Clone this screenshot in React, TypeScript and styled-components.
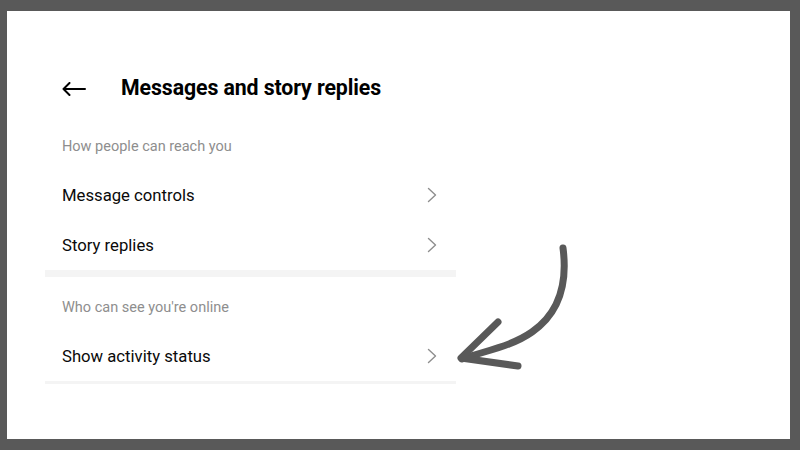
import React from 'react';
import styled, { createGlobalStyle } from 'styled-components';

const GlobalStyle = createGlobalStyle`
    html, body {
        margin: 0;
        padding: 0;
        background: #595959;
    }
    body {
        font-family: Roboto, "Liberation Sans", Arial, sans-serif;
        -webkit-font-smoothing: antialiased;
    }
`

const Frame = styled.div`
    width: 800px;
    height: 450px;
    box-sizing: border-box;
    padding: 11px 10px 11px 7px;
`

const Panel = styled.div`
    position: relative;
    height: 100%;
    background: #ffffff;
    padding-left: 38px;
`

const Column = styled.div`
    width: 411px;
`

const Header = styled.div`
    display: flex;
    align-items: center;
    height: 48px;
    padding: 52px 0 0 17px;
`

const BackButton = styled.div`
    width: 24px;
    height: 14px;
    margin: 3px 35px 0 0;
    display: flex;
`

const Title = styled.h1`
    margin: 0;
    font-size: 21.3px;
    font-weight: 700;
    color: #000;
    letter-spacing: -0.1px;
`

const SectionLabel = styled.div<{ $top: number }>`
    padding: ${({ $top }) => $top}px 0 14px 17px;
    line-height: 18px;
    font-size: 14.5px;
    color: #8e8e8e;
`

const Row = styled.div`
    display: flex;
    align-items: center;
    justify-content: space-between;
    height: 50px;
    padding: 0 19px 0 17px;
    font-size: 16.7px;
    color: #0a0a0a;
`

const Divider = styled.div<{ $size: number }>`
    height: ${({ $size }) => $size}px;
    background: #f4f4f4;
`

const Annotation = styled.svg`
    position: absolute;
    left: 433px;
    top: 215px;
`

function BackArrow () {
    return (
        <svg width="24" height="14" viewBox="0 0 24 14">
            <path d="M23 7H1.5M7.5 1L1.5 7L7.5 13" fill="none" stroke="#000" strokeWidth="2" strokeLinecap="round" strokeLinejoin="round"/>
        </svg>
    )
}

function Chevron () {
    return (
        <svg width="10" height="16" viewBox="0 0 10 16">
            <path d="M1.5 1.5L8.5 8L1.5 14.5" fill="none" stroke="#8e8e8e" strokeWidth="1.4" strokeLinecap="round" strokeLinejoin="round"/>
        </svg>
    )
}

function SettingRow ({ label }: { label: string }) {
    return (
        <Row>
            <span>{label}</span>
            <Chevron/>
        </Row>
    )
}

export default function App () {
    return (
        <>
            <GlobalStyle/>
            <Frame>
                <Panel>
                    <Column>
                        <Header>
                            <BackButton><BackArrow/></BackButton>
                            <Title>Messages and story replies</Title>
                        </Header>
                        <SectionLabel $top={27}>How people can reach you</SectionLabel>
                        <SettingRow label="Message controls"/>
                        <SettingRow label="Story replies"/>
                        <Divider $size={7}/>
                        <SectionLabel $top={22}>Who can see you're online</SectionLabel>
                        <SettingRow label="Show activity status"/>
                        <Divider $size={3}/>
                    </Column>
                    <Annotation width="140" height="160" viewBox="0 0 140 160">
                        <g fill="none" stroke="#595959" strokeWidth="7" strokeLinecap="round" strokeLinejoin="round">
                            <path d="M123 22C128 60 118 88 92 106C72 120 48 124 22 133"/>
                            <path d="M58 96L21 132L78 140"/>
                        </g>
                    </Annotation>
                </Panel>
            </Frame>
        </>
    )
}
